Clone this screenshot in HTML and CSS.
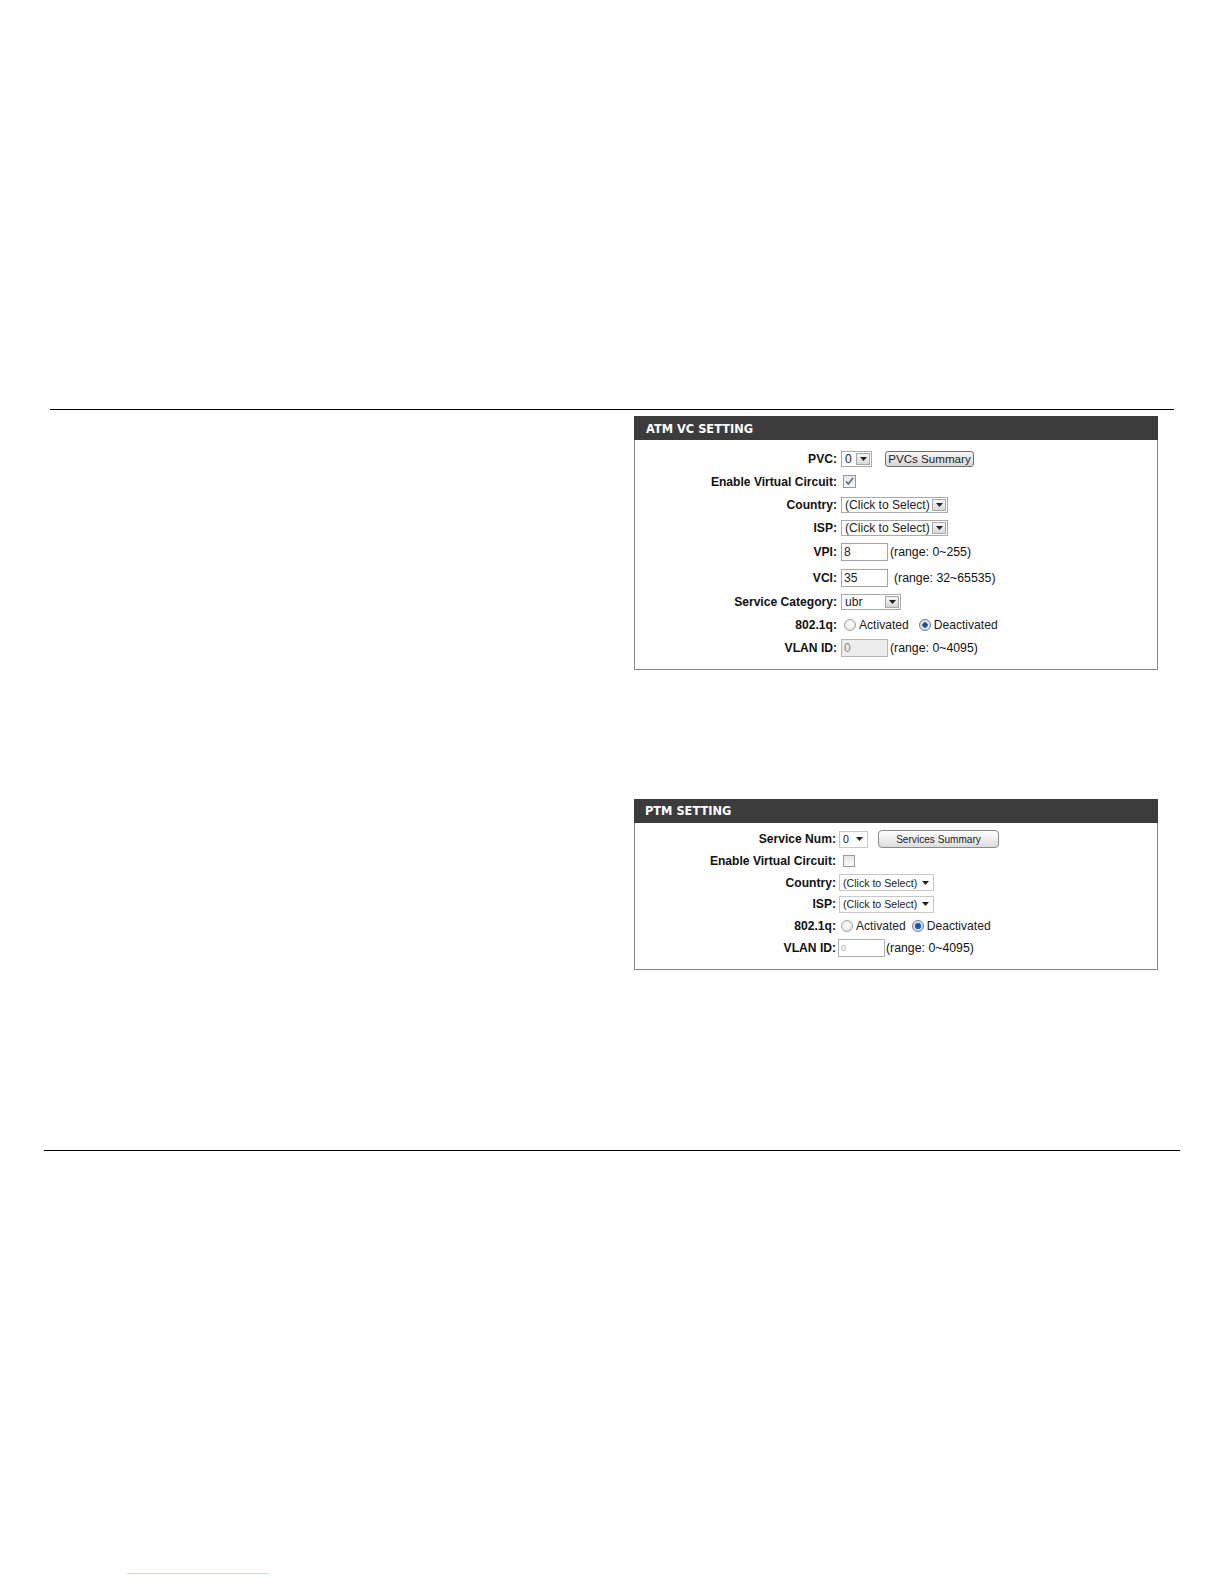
FILE: index.html
```html
<!DOCTYPE html>
<html>
<head>
<meta charset="utf-8">
<title>ATM / PTM Setting</title>
<link rel="stylesheet" href="styles.css">
</head>
<body>
<div class="page">
  <div class="rule rule-top"></div>

  <div class="panel atm">
    <div class="panel-head">ATM VC SETTING</div>
    <div class="panel-body">
      <div class="row r23">
        <span class="lbl">PVC:</span>
        <span class="sel w-pvc"><span class="sel-txt">0</span><span class="arrow-box"><svg width="7" height="4" viewBox="0 0 7 4"><path d="M0 0h7L3.5 4z" fill="#222"/></svg></span></span>
        <span class="btn btn-atm">PVCs Summary</span>
      </div>
      <div class="row r23">
        <span class="lbl">Enable Virtual Circuit:</span>
        <span class="chk"><svg width="9" height="9" viewBox="0 0 9 9"><path d="M1 4.5l2.3 2.5L8 1" fill="none" stroke="#5a6b8c" stroke-width="1.6"/></svg></span>
      </div>
      <div class="row r23">
        <span class="lbl">Country:</span>
        <span class="sel w-country"><span class="sel-txt">(Click to Select)</span><span class="arrow-box"><svg width="7" height="4" viewBox="0 0 7 4"><path d="M0 0h7L3.5 4z" fill="#222"/></svg></span></span>
      </div>
      <div class="row r23">
        <span class="lbl">ISP:</span>
        <span class="sel w-country"><span class="sel-txt">(Click to Select)</span><span class="arrow-box"><svg width="7" height="4" viewBox="0 0 7 4"><path d="M0 0h7L3.5 4z" fill="#222"/></svg></span></span>
      </div>
      <div class="row r26">
        <span class="lbl">VPI:</span>
        <span class="inp">8</span>
        <span class="range">(range: 0~255)</span>
      </div>
      <div class="row r25">
        <span class="lbl">VCI:</span>
        <span class="inp">35</span>
        <span class="range range-wide">(range: 32~65535)</span>
      </div>
      <div class="row r24">
        <span class="lbl">Service Category:</span>
        <span class="sel w-sc"><span class="sel-txt">ubr</span><span class="arrow-box"><svg width="7" height="4" viewBox="0 0 7 4"><path d="M0 0h7L3.5 4z" fill="#222"/></svg></span></span>
      </div>
      <div class="row r22">
        <span class="lbl">802.1q:</span>
        <span class="radio"></span><span class="opt">Activated</span>
        <span class="radio on"></span><span class="opt">Deactivated</span>
      </div>
      <div class="row r23">
        <span class="lbl">VLAN ID:</span>
        <span class="inp inp-dis">0</span>
        <span class="range">(range: 0~4095)</span>
      </div>
    </div>
  </div>

  <div class="panel ptm">
    <div class="panel-head head-ptm">PTM SETTING</div>
    <div class="panel-body body-ptm">
      <div class="row r22">
        <span class="lbl lbl-ptm">Service Num:</span>
        <span class="sel2 w-sn"><span class="sel2-txt">0</span><svg class="tri" width="7" height="4" viewBox="0 0 7 4"><path d="M0 0h7L3.5 4z" fill="#222"/></svg></span>
        <span class="btn btn-ptm">Services Summary</span>
      </div>
      <div class="row r22">
        <span class="lbl lbl-ptm">Enable Virtual Circuit:</span>
        <span class="chk chk-ptm"></span>
      </div>
      <div class="row r21">
        <span class="lbl lbl-ptm">Country:</span>
        <span class="sel2 w-country2"><span class="sel2-txt">(Click to Select)</span><svg class="tri" width="7" height="4" viewBox="0 0 7 4"><path d="M0 0h7L3.5 4z" fill="#222"/></svg></span>
      </div>
      <div class="row r22">
        <span class="lbl lbl-ptm">ISP:</span>
        <span class="sel2 w-country2"><span class="sel2-txt">(Click to Select)</span><svg class="tri" width="7" height="4" viewBox="0 0 7 4"><path d="M0 0h7L3.5 4z" fill="#222"/></svg></span>
      </div>
      <div class="row r22">
        <span class="lbl lbl-ptm">802.1q:</span>
        <span class="radio radio-ptm"></span><span class="opt">Activated</span>
        <span class="radio radio-ptm on on-ptm"></span><span class="opt">Deactivated</span>
      </div>
      <div class="row r21">
        <span class="lbl lbl-ptm">VLAN ID:</span>
        <span class="inp inp-ptm">0</span>
        <span class="range range-ptm">(range: 0~4095)</span>
      </div>
    </div>
  </div>

  <div class="rule rule-bottom"></div>
  <div class="footlink"></div>
</div>
</body>
</html>
```

FILE: styles.css
```css
html, body {
  margin: 0;
  padding: 0;
  background: #fff;
}
.page {
  width: 1224px;
  height: 1584px;
  box-sizing: border-box;
  padding-top: 409px;
  overflow: hidden;
  font-family: "Liberation Sans", Arial, sans-serif;
  color: #000;
}
.rule {
  height: 0;
  border-top: 1px solid #000;
}
.rule-top {
  margin-left: 50px;
  width: 1124px;
}
.rule-bottom {
  margin: 180px 0 0 44px;
  width: 1136px;
}
.footlink {
  margin: 422px 0 0 127px;
  width: 142px;
  height: 1px;
  background: #c6d8f8;
}

.panel {
  margin-left: 634px;
  width: 524px;
  box-sizing: border-box;
  border: 1px solid #888;
  border-top: none;
}
.atm { margin-top: 6px; }
.ptm { margin-top: 129px; }

.panel-head {
  margin: 0 -1px;
  height: 24px;
  background: #3c3c3c;
  color: #fff;
  font: bold 11.4px "DejaVu Sans", Verdana, sans-serif;
  line-height: 26px;
  padding-left: 12px;
}
.head-ptm {
  height: 24px;
  line-height: 25px;
  padding-left: 11px;
}
.panel-body {
  padding: 7px 0 10px 0;
}
.body-ptm {
  padding: 5px 0 11px 0;
}

.row {
  display: flex;
  align-items: center;
}
.r21 { height: 21px; }
.r22 { height: 22px; }
.r23 { height: 23px; }
.r24 { height: 24px; }
.r25 { height: 25px; }
.r26 { height: 26px; }

.lbl {
  flex: 0 0 202px;
  text-align: right;
  font-weight: bold;
  font-size: 12.1px;
  color: #111;
  margin-right: 4px;
}
.lbl-ptm {
  flex-basis: 201px;
  margin-right: 3px;
}

/* ATM select with arrow box */
.sel {
  display: inline-flex;
  align-items: center;
  justify-content: space-between;
  box-sizing: border-box;
  height: 16px;
  border: 1px solid #a9a9a9;
  background: #fff;
  font-size: 12.1px;
  color: #222;
}
.sel-txt {
  padding-left: 3px;
  white-space: nowrap;
}
.arrow-box {
  display: inline-flex;
  align-items: center;
  justify-content: center;
  box-sizing: border-box;
  width: 14px;
  height: 12px;
  margin-right: 1px;
  border: 1px solid #a8a8a8;
  background: linear-gradient(#f6f6f6, #d9d9d9);
}
.w-pvc { width: 31px; }
.w-country { width: 107px; }
.w-sc { width: 60px; }

/* PTM select: plain triangle */
.sel2 {
  display: inline-flex;
  align-items: center;
  justify-content: space-between;
  box-sizing: border-box;
  height: 17px;
  border: 1px solid #c8c8c8;
  background: #fff;
  font-size: 10.6px;
  color: #222;
}
.sel2-txt {
  padding-left: 3px;
  white-space: nowrap;
}
.tri {
  margin-right: 4px;
}
.w-sn { width: 29px; }
.w-country2 { width: 95px; }

.btn {
  display: inline-flex;
  align-items: center;
  justify-content: center;
  box-sizing: border-box;
  border: 1px solid #6e6e6e;
  border-radius: 3px;
  background: linear-gradient(#f7f7f7, #d6d6d6);
  color: #222;
  white-space: nowrap;
}
.btn-atm {
  margin-left: 13px;
  width: 89px;
  height: 16px;
  font-size: 11.6px;
}
.btn-ptm {
  margin-left: 10px;
  width: 121px;
  height: 18px;
  font-size: 10.1px;
  border-radius: 4px;
  background: linear-gradient(#ffffff, #dcdcdc);
  border-color: #8a8a8a;
}

.chk {
  display: inline-flex;
  align-items: center;
  justify-content: center;
  box-sizing: border-box;
  width: 13px;
  height: 13px;
  margin-left: 2px;
  border: 1px solid #8f9bb0;
  background: linear-gradient(#e6e6e6, #fafafa);
}
.chk-ptm {
  margin-left: 4px;
  width: 12px;
  height: 12px;
  border-color: #9a9a9a;
}

.inp {
  display: inline-flex;
  align-items: center;
  box-sizing: border-box;
  width: 47px;
  height: 18px;
  border: 1px solid #a5a5a5;
  padding-left: 2px;
  font-size: 12.1px;
  color: #222;
  background: #fff;
}
.inp-dis {
  background: #ececec;
  color: #888;
  border-color: #b5b5b5;
}
.inp-ptm {
  margin-left: -1px;
  font-size: 9px;
  color: #aaa;
  border-color: #b0b0b0;
}
.range {
  margin-left: 2px;
  font-size: 12.3px;
  color: #111;
  white-space: nowrap;
}
.range-wide { margin-left: 6px; }
.range-ptm { margin-left: 1px; }

.radio {
  display: inline-block;
  box-sizing: border-box;
  width: 12px;
  height: 12px;
  border-radius: 50%;
  border: 1px solid #a0a0a0;
  background: radial-gradient(circle at 50% 40%, #ffffff, #dedede);
  margin-left: 3px;
}
.radio.on {
  margin-left: 10px;
  border-color: #6d7f99;
  background: radial-gradient(circle, #1d3f7a 0, #2e5ea8 2.5px, #e6eaf0 3px, #cfd6e0 6px);
}
.radio-ptm {
  margin-left: 2px;
}
.radio-ptm.on-ptm {
  margin-left: 6px;
  background: radial-gradient(circle, #123c8c 0, #2d6fd6 3px, #dde6f2 3.6px, #c3ccd8 6px);
}
.opt {
  margin-left: 3px;
  font-size: 12.1px;
  color: #222;
  white-space: nowrap;
}
```
